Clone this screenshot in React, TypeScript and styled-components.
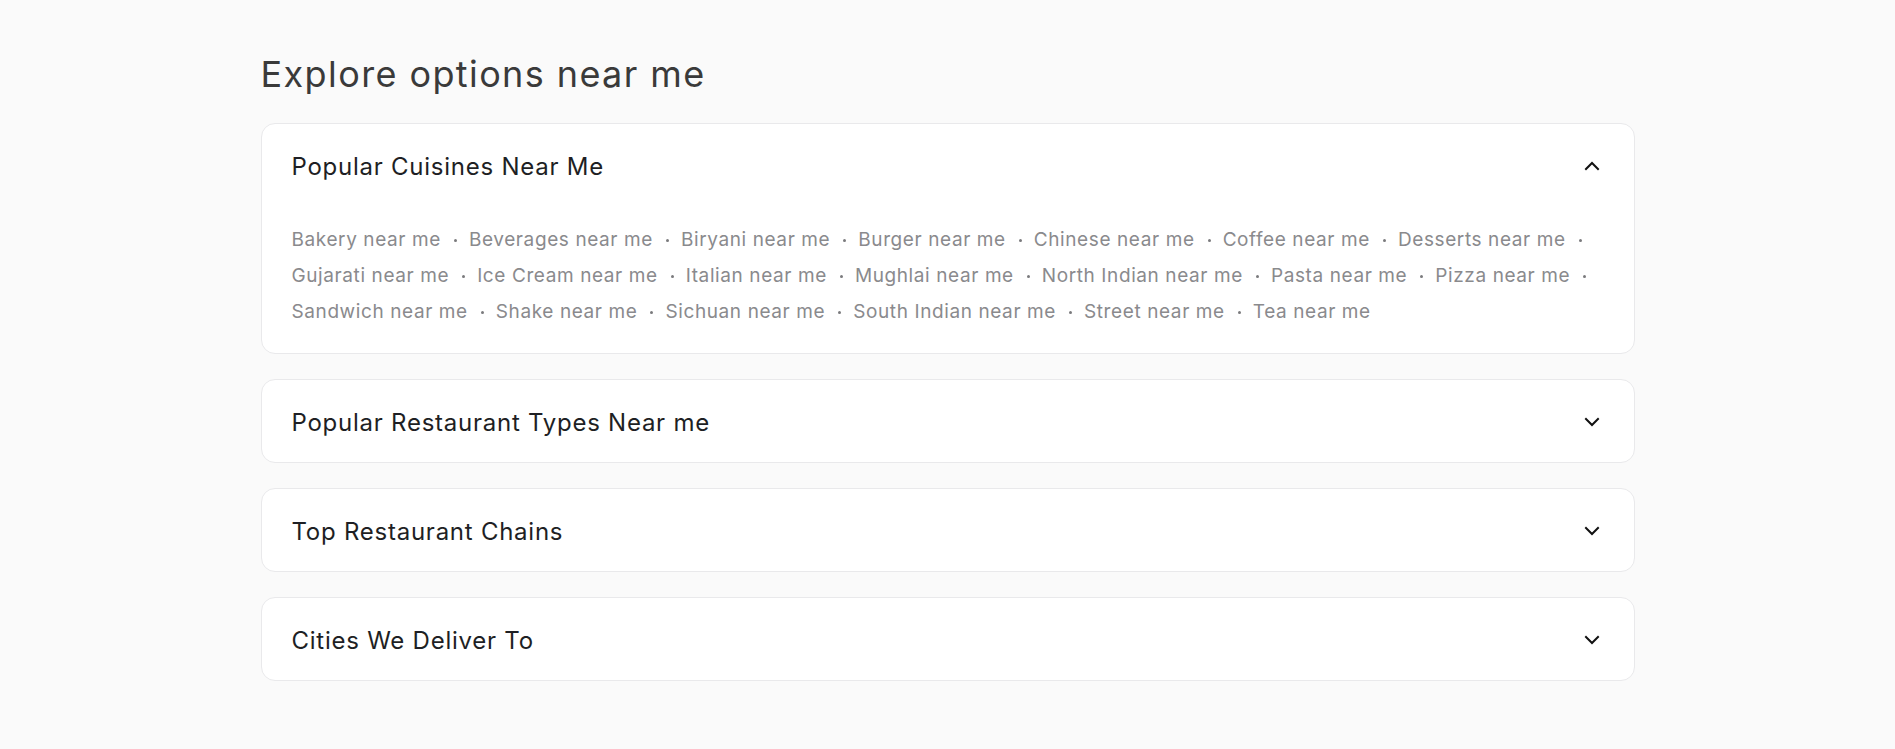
import React, { useState } from "react";
import styled, { createGlobalStyle } from "styled-components";

const Global = createGlobalStyle`
  html, body { margin: 0; padding: 0; background: #fafafa; }
  body { font-family: "Inter", "Noto Sans", sans-serif; }
`;

const Page = styled.div`
  width: 1374px;
  margin: 0 auto;
  padding: 50px 0 40px;
  display: flex;
  flex-direction: column;
`;

const Heading = styled.h2`
  margin: 0 0 25px;
  font-size: 36px;
  line-height: 48px;
  font-weight: 400;
  color: #3a3a3a;
  letter-spacing: 1.4px;
`;

const List = styled.div`
  display: flex;
  flex-direction: column;
  gap: 25px;
`;

const Card = styled.section`
  background: #fff;
  border: 1px solid #e9e9eb;
  border-radius: 14px;
  padding: 0 30px;
`;

const Header = styled.button`
  all: unset;
  box-sizing: border-box;
  width: 100%;
  height: 82px;
  padding-top: 2px;
  display: flex;
  align-items: center;
  justify-content: space-between;
  cursor: pointer;
`;

const Title = styled.span`
  font-size: 24px;
  color: #1e1f24;
  letter-spacing: 0.75px;
`;

const Icon = styled.svg`
  width: 24px;
  height: 24px;
  color: #111;
`;

const Links = styled.div`
  display: flex;
  flex-wrap: wrap;
  padding: 16px 0 23px;
`;

const Item = styled.a<{ $last: boolean }>`
  display: inline-flex;
  align-items: center;
  font-size: 19px;
  line-height: 36px;
  letter-spacing: 0.6px;
  color: #8a8a8d;
  text-decoration: none;
  cursor: pointer;
  &::after {
    content: "";
    display: ${(p) => (p.$last ? "none" : "block")};
    width: 3px;
    height: 3px;
    border-radius: 50%;
    background: #7a7a7d;
    margin: 0 12px 0 13px;
  }
`;

const cuisines = [
  "Bakery", "Beverages", "Biryani", "Burger", "Chinese", "Coffee", "Desserts",
  "Gujarati", "Ice Cream", "Italian", "Mughlai", "North Indian", "Pasta", "Pizza",
  "Sandwich", "Shake", "Sichuan", "South Indian", "Street", "Tea",
];

const Chevron = ({ up }: { up: boolean }) => (
  <Icon viewBox="0 0 24 24" fill="none" stroke="currentColor" strokeWidth={2} strokeLinecap="square" strokeLinejoin="miter">
    <path d={up ? "M6 15l6-6 6 6" : "M6 9l6 6 6-6"} />
  </Icon>
);

const sections = [
  { title: "Popular Cuisines Near Me", items: cuisines.map((c) => `${c} near me`) },
  { title: "Popular Restaurant Types Near me", items: [] as string[] },
  { title: "Top Restaurant Chains", items: [] as string[] },
  { title: "Cities We Deliver To", items: [] as string[] },
];

export default function App() {
  const [open, setOpen] = useState<number>(0);
  return (
    <>
      <Global />
      <Page>
        <Heading>Explore options near me</Heading>
        <List>
          {sections.map((s, i) => (
            <Card key={s.title}>
              <Header onClick={() => setOpen(open === i ? -1 : i)}>
                <Title>{s.title}</Title>
                <Chevron up={open === i} />
              </Header>
              {open === i && s.items.length > 0 && (
                <Links>
                  {s.items.map((t, j) => (
                    <Item key={t} $last={j === s.items.length - 1}>{t}</Item>
                  ))}
                </Links>
              )}
            </Card>
          ))}
        </List>
      </Page>
    </>
  );
}
